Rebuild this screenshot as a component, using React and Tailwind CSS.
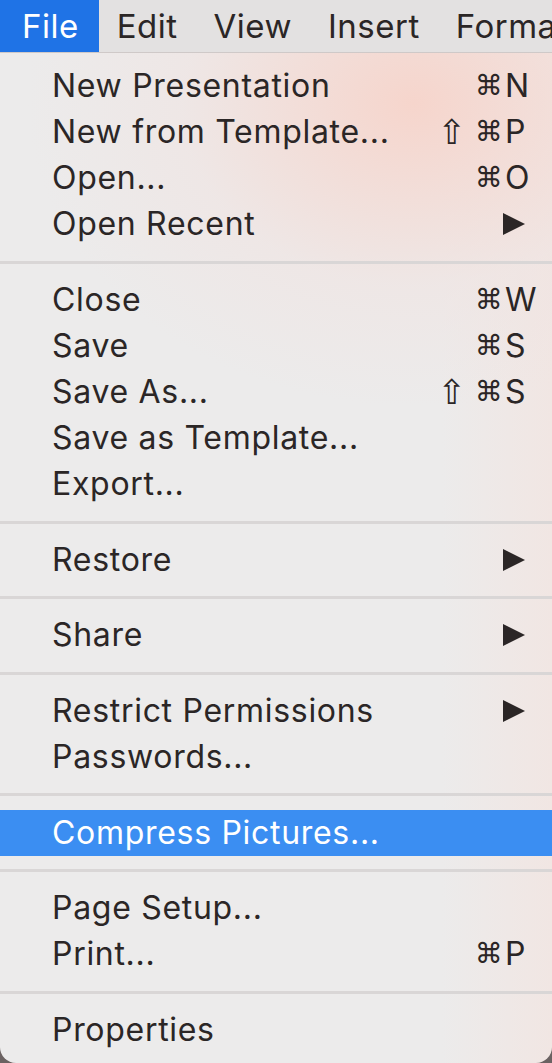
const MENUBAR = ['File', 'Edit', 'View', 'Insert', 'Format']

const SECTIONS = [
  [
    { label: 'New Presentation', key: 'N' },
    { label: 'New from Template...', shift: true, key: 'P' },
    { label: 'Open...', key: 'O' },
    { label: 'Open Recent', submenu: true },
  ],
  [
    { label: 'Close', key: 'W' },
    { label: 'Save', key: 'S' },
    { label: 'Save As...', shift: true, key: 'S' },
    { label: 'Save as Template...' },
    { label: 'Export...' },
  ],
  [{ label: 'Restore', submenu: true }],
  [{ label: 'Share', submenu: true }],
  [
    { label: 'Restrict Permissions', submenu: true },
    { label: 'Passwords...' },
  ],
  [{ label: 'Compress Pictures...', active: true }],
  [
    { label: 'Page Setup...' },
    { label: 'Print...', key: 'P' },
  ],
  [{ label: 'Properties' }],
]

function Item({ item }) {
  return (
    <div
      className={
        'h-[46.1px] flex items-center pl-[52px] pr-[14px] ' +
        (item.active ? 'bg-[#3b8ef2] text-white' : 'text-[#2b2626]')
      }
    >
      <span className="flex-1 whitespace-nowrap">{item.label}</span>
      {item.key && (
        <span className="flex items-center tracking-normal">
          {item.shift && (
            <span className="font-['DejaVu_Sans',sans-serif] text-[34px] mr-[9px]">⇧</span>
          )}
          <span className="font-['DejaVu_Sans',sans-serif] text-[28px]">⌘</span>
          <span className="w-[35px] pl-[2px]">{item.key}</span>
        </span>
      )}
      {item.submenu && (
        <svg width="22" height="22" viewBox="0 0 22 22" className="mr-[13px]">
          <polygon points="0,0 22,11 0,22" fill="#2b2626" />
        </svg>
      )}
    </div>
  )
}

export default function App() {
  return (
    <div className="w-full h-[1063px] overflow-hidden bg-[#6b6262] font-['Inter','Noto_Sans',sans-serif] text-[32px] tracking-[0.7px] leading-none">
      <div className="h-[53px] flex items-stretch bg-[#e3e1e1] border-b border-[#cfc9c8] text-[#2b2626] text-[33px] tracking-[0.5px] whitespace-nowrap">
        {MENUBAR.map((m, i) => (
          <div
            key={m}
            className={
              'flex items-center ' +
              (i === 0 ? 'bg-[#1f73e6] text-white pl-[22px] pr-[20px]' : 'px-[18px]')
            }
          >
            {m}
          </div>
        ))}
      </div>
      <div className="h-[1010px] pt-[10px] rounded-b-[16px] bg-[radial-gradient(ellipse_70%_30%_at_75%_5%,#f6d5cc_0%,rgba(240,228,226,0.6)_60%,rgba(236,234,234,0)_100%),linear-gradient(to_right,#ecebeb_80%,#f1e6e3_100%)] bg-[#ecebeb]">
        {SECTIONS.map((section, si) => (
          <div key={si}>
            {si > 0 && (
              <div className="h-[29.5px] flex items-center">
                <div className="h-[3px] w-full bg-[#d9d6d6]" />
              </div>
            )}
            {section.map(item => (
              <Item key={item.label} item={item} />
            ))}
          </div>
        ))}
      </div>
    </div>
  )
}
